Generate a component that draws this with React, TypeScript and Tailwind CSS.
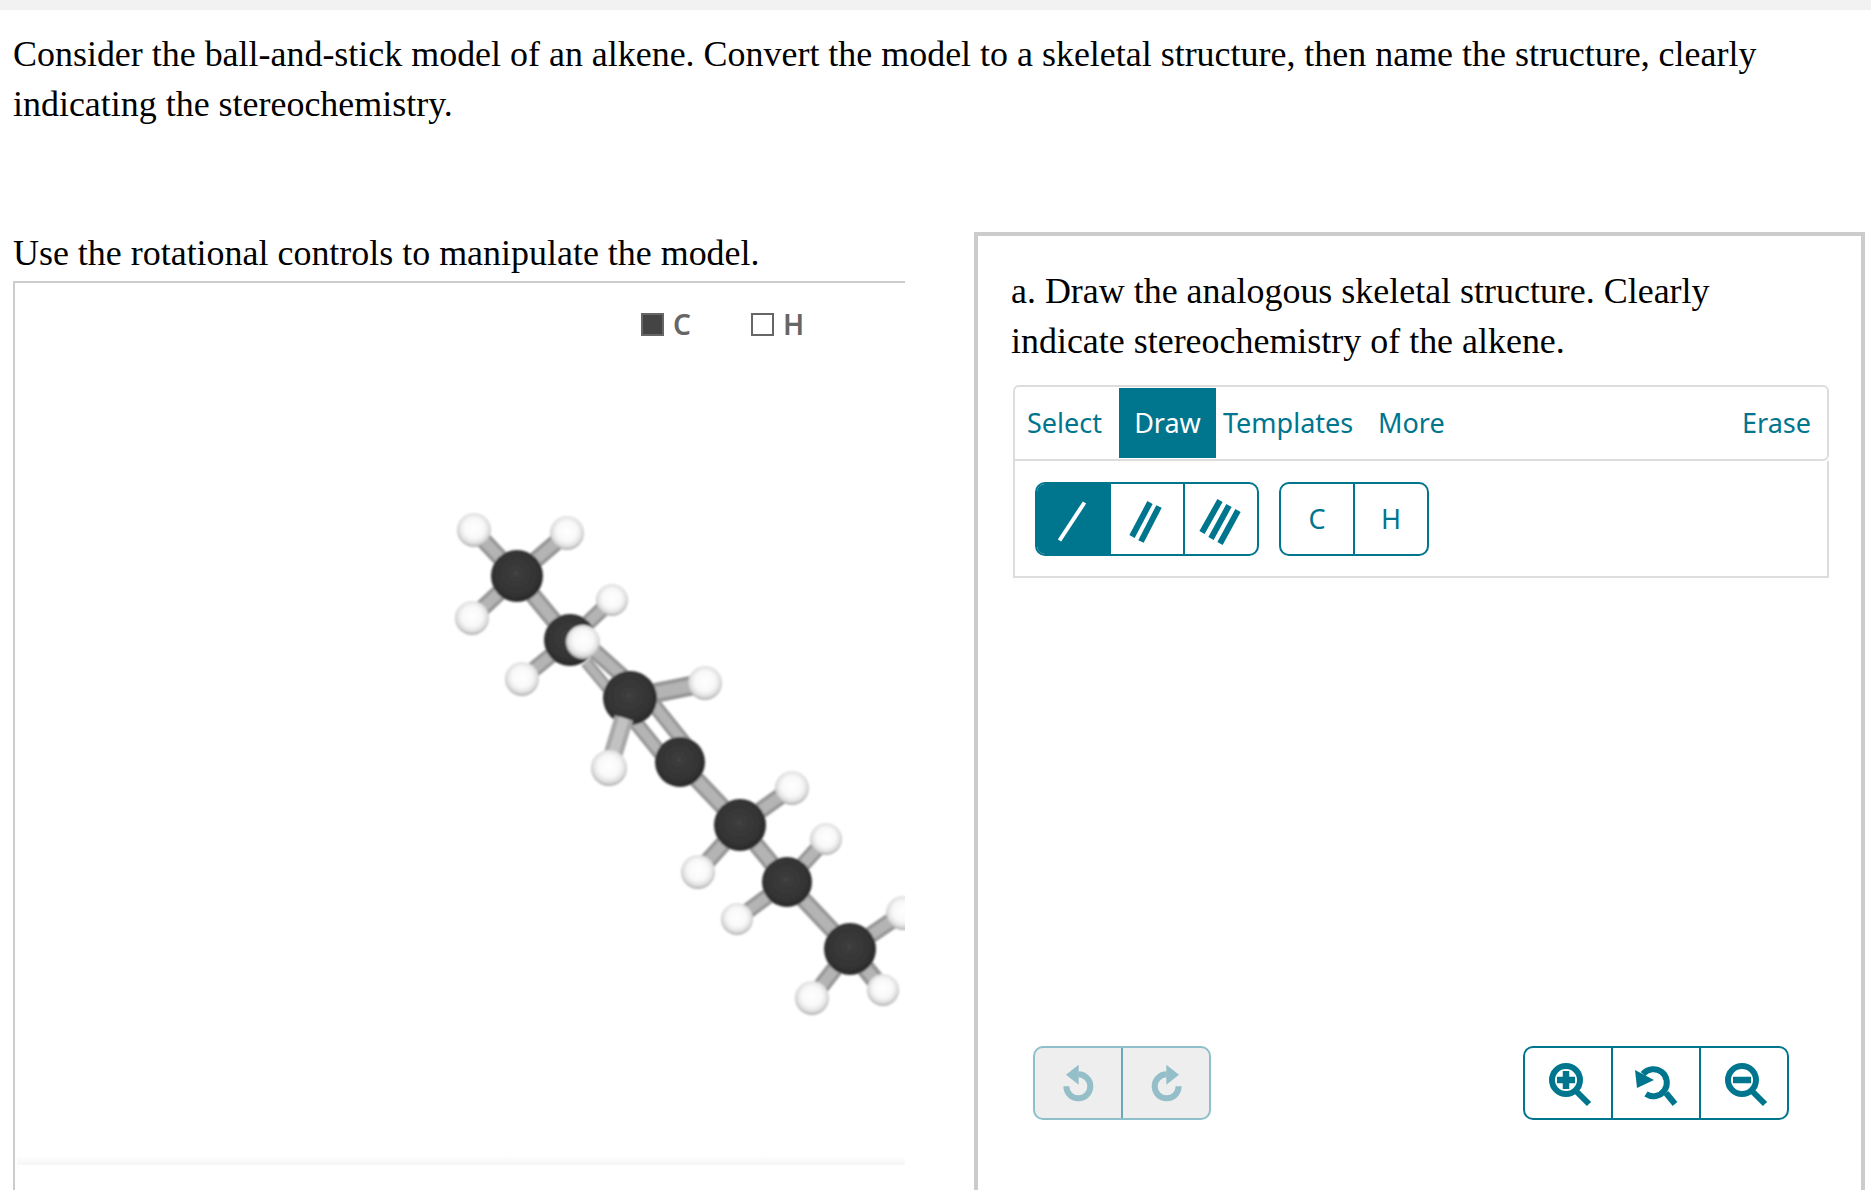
const TEAL = '#00758e';

const bonds: [number, number, number, number, number][] = [
  [517, 576, 474, 530, 17],
  [517, 576, 567, 533, 17],
  [517, 576, 472, 618, 17],
  [570, 640, 612, 600, 16],
  [570, 640, 522, 679, 16],
  [517, 576, 570, 640, 17],
  [705, 683, 630, 698, 20],
  [792, 788, 740, 825, 17],
  [698, 872, 740, 825, 17],
  [826, 839, 787, 882, 16],
  [737, 919, 787, 882, 16],
  [903, 913, 850, 949, 17],
  [812, 998, 850, 949, 17],
  [883, 990, 850, 949, 19],
  [586, 662, 624, 708, 12],
  [578, 636, 640, 692, 16],
  [624, 708, 674, 770, 15],
  [642, 690, 690, 750, 15],
  [680, 762, 740, 825, 17],
  [740, 825, 787, 882, 17],
  [787, 882, 850, 949, 17],
];

const carbons: [number, number, number][] = [
  [517, 576, 26],
  [570, 640, 26],
  [630, 698, 27],
  [680, 762, 25],
  [740, 825, 26],
  [787, 882, 25],
  [850, 949, 26],
];

const hydrogens: [number, number, number][] = [
  [474, 530, 17],
  [567, 533, 17],
  [472, 618, 17],
  [612, 600, 16],
  [522, 679, 17],
  [705, 683, 17],
  [792, 788, 17],
  [698, 872, 17],
  [826, 839, 16],
  [737, 919, 16],
  [903, 913, 17],
  [812, 998, 17],
  [883, 990, 16],
];

const Molecule = () => {
  return (
    <svg viewBox="15 500 890 540" className="w-[890px] h-[540px] block">
      <defs>
        <radialGradient id="carbon" cx="48%" cy="45%" r="52%">
          <stop offset="0%" stopColor="#4a4a4a" />
          <stop offset="10%" stopColor="#3c3c3c" />
          <stop offset="75%" stopColor="#343434" />
          <stop offset="100%" stopColor="#2a2a2a" />
        </radialGradient>
        <radialGradient id="hydrogen" cx="50%" cy="45%" r="55%">
          <stop offset="0%" stopColor="#ffffff" />
          <stop offset="55%" stopColor="#f8f8f8" />
          <stop offset="82%" stopColor="#dedede" />
          <stop offset="100%" stopColor="#a8a8a8" />
        </radialGradient>
        <filter id="soft" x="-10%" y="-10%" width="120%" height="120%">
          <feGaussianBlur stdDeviation="1" />
        </filter>
      </defs>
      <g filter="url(#soft)">
        {bonds.map(([x1, y1, x2, y2, w], i) => (
          <g key={i}>
            <line x1={x1} y1={y1} x2={x2} y2={y2} stroke="#959595" strokeWidth={w} />
            <line x1={x1} y1={y1} x2={x2} y2={y2} stroke="#b4b4b4" strokeWidth={w * 0.6} />
          </g>
        ))}
        {hydrogens.map(([cx, cy, r], i) => (
          <circle key={i} cx={cx} cy={cy} r={r} fill="url(#hydrogen)" />
        ))}
        {carbons.map(([cx, cy, r], i) => (
          <circle key={i} cx={cx} cy={cy} r={r} fill="url(#carbon)" />
        ))}
        <line x1="609" y1="768" x2="624" y2="718" stroke="#a8a8a8" strokeWidth="19" />
        <line x1="609" y1="768" x2="624" y2="718" stroke="#c2c2c2" strokeWidth="10" />
        <circle cx="609" cy="768" r="18" fill="url(#hydrogen)" />
        <circle cx="583" cy="642" r="17" fill="url(#hydrogen)" />
      </g>
    </svg>
  );
};

const ToolBtn = ({ w, last, active, children }: { w: string; last?: boolean; active?: boolean; children: React.ReactNode }) => {
  return (
    <div
      className={`${w} flex items-center justify-center ${last ? '' : 'border-r-2 border-[#00758e]'} ${active ? 'bg-[#00758e]' : ''}`}
    >
      {children}
    </div>
  );
};

const ZoomIcon = ({ kind }: { kind: 'in' | 'out' }) => {
  return (
    <svg viewBox="0 0 44 44" className="w-[44px] h-[44px] overflow-visible" fill="none" stroke={TEAL}>
      <circle cx="20" cy="19" r="14" strokeWidth="6" />
      <path d="M30 30 L43 43" strokeWidth="6" />
      <path d="M11 19 H29" strokeWidth="6.5" />
      {kind === 'in' && <path d="M20 10 V28" strokeWidth="6.5" />}
    </svg>
  );
};

const ArrowIcon = ({ flip }: { flip?: boolean }) => {
  return (
    <svg viewBox="125 100 105 120" className={`w-[35px] h-[40px] ${flip ? '-scale-x-100' : ''}`} fill="none">
      <path d="M141 170 A36 36 0 1 0 177 134" stroke="#94bfc9" strokeWidth="18" />
      <path d="M140 135 L178 105 L178 165 Z" fill="#94bfc9" />
    </svg>
  );
};

export default function App() {
  return (
    <div className="w-[1871px] h-[1190px] overflow-hidden bg-white text-black font-['Liberation_Serif',serif]">
      <div className="h-[10px] bg-[#f2f2f2]" />
      <div className="pl-[13px] pr-[80px] pt-[19px] h-[218px] text-[35.95px] leading-[50px]">
        Consider the ball-and-stick model of an alkene. Convert the model to a skeletal structure, then name the structure, clearly indicating the stereochemistry.
      </div>
      <div className="flex items-start">
        <div className="w-[905px] ml-[13px] shrink-0">
          <div className="text-[35.95px] leading-[50px] h-[53px]">Use the rotational controls to manipulate the model.</div>
          <div className="w-[892px] h-[920px] border-l-2 border-t-2 border-[#cccccc] flex flex-col">
            <div className="flex h-[217px] pt-[29px] pl-[626px] font-['Noto_Sans',sans-serif] text-[#666666] text-[28px] leading-[24px] font-semibold">
              <div className="flex items-center h-[24px] gap-[9px] w-[110px]">
                <span className="w-[23px] h-[23px] bg-[#444444] border-2 border-[#666666]" />
                <span>C</span>
              </div>
              <div className="flex items-center h-[24px] gap-[9px]">
                <span className="w-[23px] h-[23px] border-2 border-[#666666]" />
                <span>H</span>
              </div>
            </div>
            <Molecule />
            <div className="mt-[115px] ml-[2px] h-[10px] bg-gradient-to-b from-white to-[#f6f6f6]" />
          </div>
        </div>
        <div className="ml-[56px] mt-[4px] w-[891px] h-[1000px] border-[4px] border-[#cccccc] pl-[33px] pr-[33px] pt-[30px]">
          <div className="text-[35.95px] leading-[50px]">
            a. Draw the analogous skeletal structure. Clearly indicate stereochemistry of the alkene.
          </div>
          <div className="mt-[19px] ml-[2px] w-[816px] font-['Noto_Sans',sans-serif] text-[#00758e] text-[27px]">
            <div className="h-[76px] border-2 border-[#dddddd] rounded-t-[6px] rounded-br-[6px] flex items-center pl-[12px] pr-[16px]">
              <span className="w-[92px]">Select</span>
              <span className="w-[97px] h-[70px] bg-[#00758e] text-white flex items-center justify-center">Draw</span>
              <span className="ml-[7px] w-[155px]">Templates</span>
              <span>More</span>
              <span className="ml-auto">Erase</span>
            </div>
            <div className="h-[117px] border-2 border-t-0 border-[#dddddd] pt-[21px] pl-[20px] flex gap-[20px]">
              <div className="flex h-[74px] border-2 border-[#00758e] rounded-[10px] overflow-hidden">
                <ToolBtn w="w-[74px]" active>
                  <svg viewBox="0 0 44 44" className="w-[44px] h-[44px] overflow-visible">
                    <path d="M8.5 43.5 L33.5 5.5" stroke="#ffffff" strokeWidth="4" />
                  </svg>
                </ToolBtn>
                <ToolBtn w="w-[74px]">
                  <svg viewBox="0 0 44 44" className="w-[44px] h-[44px] overflow-visible">
                    <path d="M7 39.5 L25 5.5 M16 44.5 L34 9.5" stroke={TEAL} strokeWidth="6" />
                  </svg>
                </ToolBtn>
                <ToolBtn w="w-[72px]" last>
                  <svg viewBox="0 0 44 44" className="w-[44px] h-[44px] overflow-visible">
                    <path d="M3 35.5 L21 3.5 M12 41.5 L30 8.5 M21 46.5 L39 13.5" stroke={TEAL} strokeWidth="6" />
                  </svg>
                </ToolBtn>
              </div>
              <div className="flex h-[74px] border-2 border-[#00758e] rounded-[10px] overflow-hidden">
                <ToolBtn w="w-[74px]">C</ToolBtn>
                <ToolBtn w="w-[72px]" last>H</ToolBtn>
              </div>
            </div>
            <div className="mt-[468px] ml-[20px] flex justify-between pr-[40px]">
              <div className="flex h-[74px] border-2 border-[#8fbfcb] bg-[#eeeeee] rounded-[10px] overflow-hidden">
                <div className="w-[88px] flex items-center justify-center border-r-2 border-[#68a9b9]">
                  <ArrowIcon />
                </div>
                <div className="w-[86px] flex items-center justify-center">
                  <ArrowIcon flip />
                </div>
              </div>
              <div className="flex h-[74px] border-2 border-[#00758e] rounded-[10px] overflow-hidden">
                <ToolBtn w="w-[88px]"><ZoomIcon kind="in" /></ToolBtn>
                <ToolBtn w="w-[88px]">
                  <svg viewBox="0 0 44 44" className="w-[44px] h-[44px] overflow-visible" fill="none" stroke={TEAL}>
                    <path d="M12 33 A13.5 13.5 0 1 0 9 13" strokeWidth="6" />
                    <path d="M32 32 L41 43" strokeWidth="6" />
                    <path d="M1 9 L3 27 L20 19 Z" fill={TEAL} stroke="none" />
                  </svg>
                </ToolBtn>
                <ToolBtn w="w-[86px]" last><ZoomIcon kind="out" /></ToolBtn>
              </div>
            </div>
          </div>
        </div>
      </div>
    </div>
  );
}
